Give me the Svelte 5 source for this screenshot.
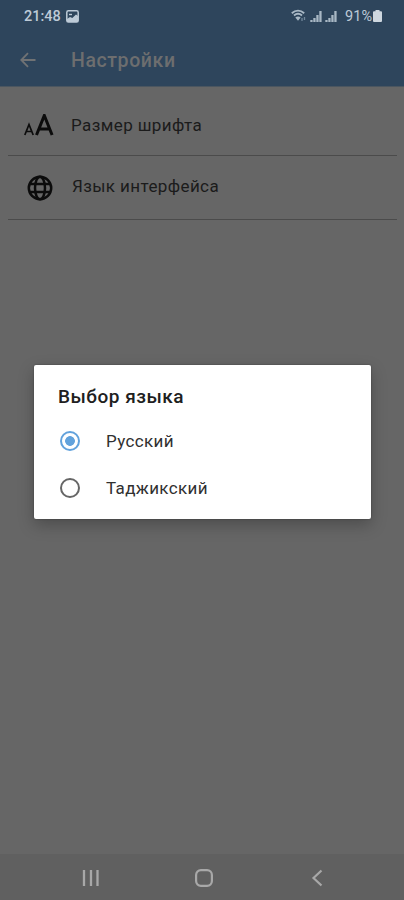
<script>
	let selected = $state("ru");

	const languages = [
		{ id: "ru", name: "Русский" },
		{ id: "tg", name: "Таджикский" }
	];
	// heights of the signal bars
	const bars = [2, 4, 7, 11];
</script>

<div class="screen">
	<header>
		<div class="status">
			<span class="time">21:48</span>
			<svg class="picture" width="13" height="13" viewBox="0 0 13 13">
				<rect x="0.8" y="0.8" width="11.4" height="11.2" rx="1.6" fill="none" stroke="#bdcad7" stroke-width="1.5" />
				<path d="M1 9L4 7l2.300 1L10 4.600 12 6v6H1z" fill="#bdcad7" />
				<path d="M3 4.500h3" stroke="#bdcad7" stroke-width="1.400" />
			</svg>
			<svg class="wifi" width="16" height="14" viewBox="0 0 16 14">
				<path d="M.8 4.200C4.500 1 9.500 1 13.200 4.200M3 6.400C5.500 4.300 8.500 4.300 11 6.400" fill="none" stroke="#aab9c6" stroke-width="1.900" />
				<path d="M4.300 8.500Q7 6.400 9.700 8.500L7 11.800z" fill="#aab9c6" />
				<path d="M11 12V9M13.500 11V8" stroke="#71879b" stroke-width="1.300" />
			</svg>
			{#each [0, 1] as sim}
				<svg class="signal" width="13" height="12" viewBox="0 0 13 12">
					{#each bars as h, i}
						<rect x={i * 3 + 0.3} y={12 - h} width="2.300" height={h} fill="#a9b8c5" />
					{/each}
				</svg>
			{/each}
			<span class="percent">91%</span>
			<svg class="battery" width="9" height="12" viewBox="0 0 9 12">
				<path d="M2.500 0h4v1.200H8q1 0 1 1V11q0 1-1 1H1q-1 0-1-1V2.200q0-1 1-1h1.500z" fill="#ced7df" />
			</svg>
		</div>
		<div class="bar">
			<svg width="16" height="16" viewBox="0 0 16 16" fill="none" stroke="#707274" stroke-width="1.800">
				<path d="M15.500 8H2M8 1.200L1.300 8 8 14.800" />
			</svg>
			<h1>Настройки</h1>
		</div>
	</header>

	<main>
		<div class="row first">
			<svg width="30" height="22" viewBox="0 0 30 22" fill="none" stroke="#0c0c0c">
				<path d="M.8 21L5 10.500 9.200 21M2.300 17.500H7.700" stroke-width="1.700" />
				<path d="M12.500 21L20.300 1.500 28.100 21M15 15H25.500" stroke-width="3" />
			</svg>
			<span>Размер шрифта</span>
		</div>
		<div class="row second">
			<svg width="26" height="26" viewBox="0 0 26 26" fill="none" stroke="#0c0c0c" stroke-width="2.500">
				<circle cx="13" cy="13" r="11.200" />
				<ellipse cx="13" cy="13" rx="5" ry="11.200" />
				<path d="M2.500 9H23.500M2.500 17H23.500" />
			</svg>
			<span>Язык интерфейса</span>
		</div>
	</main>

	<nav>
		<svg width="18" height="18" viewBox="0 0 18 18" stroke="#a8a8a8" stroke-width="2.300">
			<path d="M2 1V17M9 1V17M15.500 1V17" />
		</svg>
		<svg width="18" height="18" viewBox="0 0 18 18" fill="none" stroke="#a8a8a8" stroke-width="2.200">
			<rect x="1.100" y="1.100" width="15.800" height="15.800" rx="4.800" />
		</svg>
		<svg width="18" height="18" viewBox="0 0 18 18" fill="none" stroke="#a8a8a8" stroke-width="2.200">
			<path d="M13.500 1.500L5.500 9 13.500 16.500" />
		</svg>
	</nav>

	<div class="dialog">
		<h2>Выбор языка</h2>
		{#each languages as lang}
			<label>
				<input type="radio" name="lang" value={lang.id} bind:group={selected} />
				<span class="radio"></span>
				<span class="name">{lang.name}</span>
			</label>
		{/each}
	</div>
</div>

<style>
	:global(body) {
		margin: 0;
		background: #666;
	}
	.screen {
		position: relative;
		display: flex;
		flex-direction: column;
		width: 404px;
		height: 900px;
		overflow: hidden;
		background: #666;
		font-family: Roboto, "Noto Sans", sans-serif;
	}
	svg {
		display: block;
		flex: none;
	}
	header {
		box-sizing: border-box;
		height: 87px;
		border-bottom: 1px solid #4b5660;
		background: #2e455c;
	}
	.status {
		display: flex;
		align-items: center;
		height: 32px;
		padding: 0 22px 0 24px;
		color: #bdcad7;
		font-size: 14.5px;
		line-height: 32px;
	}
	.time {
		width: 37px;
		margin-right: 5px;
		padding-top: 2px;
		font-weight: 500;
	}
	.wifi {
		margin-left: auto;
		margin-right: 3px;
	}
	.signal {
		margin-right: 2px;
	}
	.percent {
		margin-left: 5px;
		margin-right: 1px;
		padding-top: 1px;
		font-size: 14.5px;
	}
	.bar {
		display: flex;
		align-items: center;
		height: 56px;
		padding-left: 20px;
	}
	h1 {
		margin: 0 0 0 35px;
		color: #6d6e6f;
		font-size: 19.5px;
		font-weight: 500;
		letter-spacing: 0.6px;
	}
	main {
		flex: 1;
		padding: 0 7px 0 8px;
	}
	.row {
		display: flex;
		align-items: center;
		box-sizing: border-box;
		border-bottom: 1px solid #4b4b4b;
		color: #1b1b1b;
		font-size: 17px;
		letter-spacing: 0.4px;
	}
	.first {
		height: 69px;
		padding: 7px 0 0 16px;
	}
	.first svg {
		margin-top: 1px;
	}
	.first span {
		margin-left: 17px;
	}
	.second {
		height: 64px;
		padding-left: 19px;
	}
	.second span {
		margin: 0 0 3px 19px;
	}
	nav {
		display: flex;
		align-items: center;
		justify-content: space-between;
		height: 46px;
		padding: 2px 78px 0 82px;
		box-sizing: border-box;
		background: #606060;
	}
	.dialog {
		position: absolute;
		top: 365px;
		left: 34px;
		width: 337px;
		height: 154px;
		box-sizing: border-box;
		padding: 20px 24px 0;
		border-radius: 2px;
		background: #fff;
		box-shadow: 0 6px 16px rgba(0, 0, 0, 0.25), 0 0 2px rgba(0, 0, 0, 0.35);
	}
	h2 {
		height: 24px;
		margin: 0 0 8px;
		color: #202020;
		font-size: 19px;
		font-weight: 500;
		line-height: 24px;
		letter-spacing: 0.5px;
	}
	label {
		display: flex;
		align-items: center;
		height: 47px;
		color: #303030;
		font-size: 17px;
		letter-spacing: 0.35px;
	}
	.name {
		padding-top: 1px;
	}
	input {
		position: absolute;
		opacity: 0;
	}
	.radio {
		box-sizing: border-box;
		width: 20px;
		height: 20px;
		margin: 0 26px 0 2px;
		border: 2px solid #666;
		border-radius: 50%;
	}
	input:checked + .radio {
		border-color: #62a2dc;
		background: radial-gradient(circle, #62a2dc 4.5px, transparent 5.2px);
	}
</style>
